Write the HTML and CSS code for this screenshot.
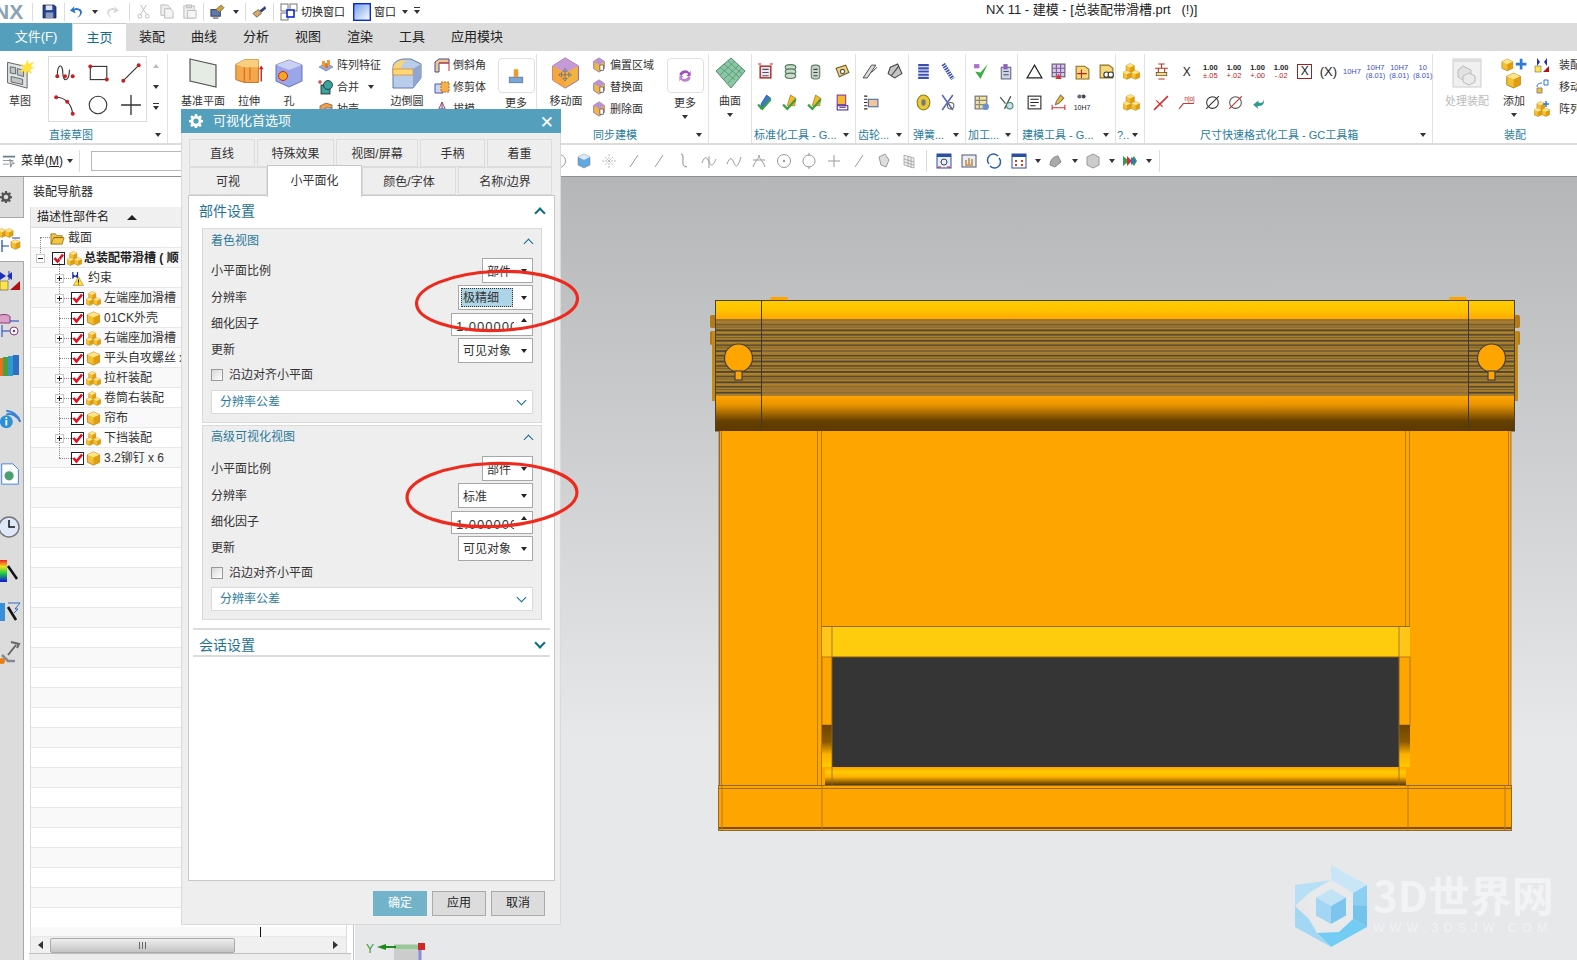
FILE: index.html
```html
<!DOCTYPE html>
<html lang="zh">
<head>
<meta charset="utf-8">
<title>NX 11 - 建模</title>
<link rel="stylesheet" href="styles.css">
</head>
<body>
<svg class="defs" aria-hidden="true">
<defs>
<symbol id="cube" viewBox="0 0 16 16"><path d="M8 1l6.500 3v8L8 15l-6.500-3V4z" fill="#f4c02f" stroke="#a67c1a" stroke-width=".8"/><path d="M1.500 4L8 7l6.500-3L8 1z" fill="#ffe48a"/><path d="M8 7v8l6.500-3V4z" fill="#e09d12"/></symbol>
<symbol id="asm" viewBox="0 0 16 16"><use href="#cube" x="2" y="0" width="9.500" height="9.500"/><use href="#cube" x="-1" y="6.500" width="9.500" height="9.500"/><use href="#cube" x="7" y="6.500" width="9.500" height="9.500"/></symbol>
<symbol id="chk" viewBox="0 0 13 13"><rect x=".5" y=".5" width="12" height="12" fill="#fff" stroke="#222"/><path d="M2.500 6l3 3.500L11 2.500" fill="none" stroke="#e01020" stroke-width="2.600"/></symbol>
<symbol id="folder" viewBox="0 0 16 14"><path d="M1 13V2h5l1 2h6v2H4L1 13h12l2-7H4" fill="#f2c644" stroke="#8c6a14" stroke-width=".8"/></symbol>
<symbol id="warn" viewBox="0 0 16 16"><path d="M3 1v7M8 1v7M3 4l2 1.500L3 7M8 4L6 5.500 8 7" stroke="#1a2fb0" stroke-width="1.300" fill="none"/><path d="M9 6l5.500 9.500h-11z" fill="#ffdc3a" stroke="#99801a" stroke-width=".6"/><path d="M9 9v3.500M9 13.500v1" stroke="#222"/></symbol>
<symbol id="plane" viewBox="0 0 32 32"><path d="M3 2l26 6v22L3 24z" fill="#e4ece3" stroke="#555" stroke-width="1.200"/></symbol>
<symbol id="sk" viewBox="0 0 32 36"><path d="M2 6l22 5v24L2 29z" fill="#dfe3e3" stroke="#555"/><path d="M5 11l6 1v7l-6-1zM13 13l7 2v7l-7-2zM6 22l13 3v6L6 28z" fill="#bfc4c4" stroke="#444" stroke-width=".8"/><path d="M24 3l2 5 6-3-4 6 5 1-6 2 3 5-6-3-2 6-1-6-6 1 5-5-4-4 6 1z" fill="#ffe23a"/></symbol>
<symbol id="extr" viewBox="0 0 32 34"><path d="M2 8l9-5h15v24H11l-9-3z" fill="#f3a94b" stroke="#c46a18"/><path d="M2 8l9 3h15v-8H11z" fill="#f8cf7e"/><path d="M11 11v16M17 11v14" stroke="#d95a20"/><path d="M29 12v14" stroke="#d02020" stroke-width="1.500"/><path d="M29 9l-2.500 4h5z" fill="#d02020"/></symbol>
<symbol id="hole" viewBox="0 0 32 32"><path d="M16 3l13 5v16l-13 6-13-6V8z" fill="#9aa6e8" stroke="#6a74b8"/><path d="M3 8l13 5 13-5-13-5z" fill="#c9d0f4"/><circle cx="10" cy="19" r="4.500" fill="#f5a623" stroke="#d02020"/></symbol>
<symbol id="pat" viewBox="0 0 16 16"><path d="M1 10l7-4 7 4-7 4z" fill="#9aa9d8" stroke="#6070a8" stroke-width=".6"/><rect x="4" y="4" width="3" height="5" fill="#f29a2e"/><rect x="9" y="3" width="3" height="5" fill="#f29a2e"/><rect x="7" y="7" width="3" height="4" fill="#e07a1a"/></symbol>
<symbol id="unite" viewBox="0 0 16 16"><rect x="3" y="6" width="9" height="9" fill="#3aa39a" stroke="#222" stroke-width=".8"/><circle cx="10" cy="6" r="4.500" fill="#3aa39a" stroke="#222" stroke-width=".8"/><path d="M0 3h4M2 1v4" stroke="#e01010"/></symbol>
<symbol id="shell" viewBox="0 0 16 16"><path d="M2 5l6-3 6 2v10H2z" fill="#f0a04a" stroke="#8a5a30" stroke-width=".8"/><path d="M7 7h6v7H7z" fill="#fff" stroke="#6070a8"/></symbol>
<symbol id="blend" viewBox="0 0 32 32"><path d="M2 10c0-5 6-8 12-8h6l10 5v14l-8 10H2z" fill="#b9cdea" stroke="#6078a8"/><path d="M2 12c0-6 6-9 12-9h5c-5 0-9 4-9 9z" fill="#f5d57a"/><path d="M2 12h20v6H2z" fill="#ffd873" stroke="#d9701a" stroke-width=".6"/><path d="M22 12l8-5v14l-8 10z" fill="#8ea6d0"/></symbol>
<symbol id="cham" viewBox="0 0 16 16"><path d="M1 5l4-3h10v4H5v9H1z" fill="#f3c985" stroke="#3c4ca0"/><path d="M5 6h10v8" stroke="#d03030" fill="none"/></symbol>
<symbol id="trim" viewBox="0 0 16 16"><path d="M1 5h8v9H1z" fill="#cdd4f2" stroke="#4a58a8"/><path d="M7 3h8v10H7z" fill="#f5b04a" stroke="#c06a20" stroke-dasharray="2 1"/></symbol>
<symbol id="draft" viewBox="0 0 16 16"><path d="M8 1l6 13H2z" fill="#eef" stroke="#d04040"/><path d="M8 1v13M5 8h6" stroke="#4a58a8"/></symbol>
<symbol id="more" viewBox="0 0 16 16"><rect x="2" y="9" width="12" height="5" fill="#7ba4d8" stroke="#4a6a9a" stroke-width=".6"/><rect x="6" y="2" width="4" height="7" fill="#f29a2e"/></symbol>
<symbol id="mv" viewBox="0 0 32 36"><path d="M15 1l15 9v16L15 35 1 26V10z" fill="#f3b33e" stroke="#8a5fa8"/><path d="M1 10l14-9 15 9-15 8z" fill="#c49ad8"/><path d="M15 18v17L1 26V10z" fill="#f7a63a"/><path d="M8 20h14M15 13v14M8 20l3-2.500v5zM22 20l-3-2.500v5zM15 13l-2.500 3h5zM15 27l-2.500-3h5z" fill="#ddd" stroke="#666" stroke-width=".8"/></symbol>
<symbol id="off" viewBox="0 0 16 18"><path d="M8 1l6 4v8l-6 4-6-4V5z" fill="#f0b74a" stroke="#7a5a9a" stroke-width=".8"/><path d="M2 5l6-4 6 4-6 4z" fill="#b894d4"/><path d="M9 9h4v6H9z" fill="#fff" stroke="#333" stroke-width=".7"/></symbol>
<symbol id="sync" viewBox="0 0 16 16"><path d="M3 7a5 5 0 0 1 9-2l1-2v5H9l2-1.500A3.500 3.500 0 0 0 5 8z" fill="#a050c0"/><path d="M13 9a5 5 0 0 1-9 2l-1 2V8h4l-2 1.500A3.500 3.500 0 0 0 11 8z" fill="#c080d8"/></symbol>
<symbol id="surf" viewBox="0 0 32 32"><path d="M2 14L17 1l14 13-14 17z" fill="#89c7a5" stroke="#4f8a6a"/><path d="M6 10l15 13M10 7l15 13M14 4l14 13M6 18L21 4M10 22L25 8M14 26l14-15" stroke="#4f8a6a" stroke-width=".7"/></symbol>
<symbol id="fr" viewBox="0 0 16 16"><rect x="3" y="3" width="10" height="11" fill="#e8e8ff" stroke="#b03020" stroke-width="1.400"/><path d="M5 6h6M5 9h6M5 12h6" stroke="#555"/><path d="M1 1h3M12 1h3" stroke="#d02020"/></symbol>
<symbol id="coilg" viewBox="0 0 16 16"><ellipse cx="8" cy="4" rx="5" ry="2.500" fill="#cfd8cf" stroke="#4a7a5a"/><ellipse cx="8" cy="8" rx="5" ry="2.500" fill="#cfd8cf" stroke="#4a7a5a"/><ellipse cx="8" cy="12" rx="5" ry="2.500" fill="#cfd8cf" stroke="#4a7a5a"/></symbol>
<symbol id="cyl" viewBox="0 0 16 16"><rect x="4" y="2" width="8" height="13" rx="3" fill="#c8d4c8" stroke="#5a7a6a"/><path d="M6 6h4M6 9h4M6 12h4" stroke="#444"/></symbol>
<symbol id="tag" viewBox="0 0 16 16"><path d="M2 5l9-3 3 7-9 4z" fill="#f1d27a" stroke="#6a5a30"/><circle cx="8" cy="8" r="2" fill="#fff" stroke="#555"/></symbol>
<symbol id="gblue" viewBox="0 0 16 16"><path d="M9 1l4 3-6 8-4 2 1-5z" fill="#3a78c8" stroke="#1a4a88" stroke-width=".6"/><path d="M1 10l4 4 8-9" stroke="#3aa040" stroke-width="2" fill="none"/></symbol>
<symbol id="gyell" viewBox="0 0 16 16"><path d="M8 1l5 3-1 7H5z" fill="#f5b92a" stroke="#8a6a1a" stroke-width=".6"/><path d="M1 10l4 4 8-9" stroke="#3aa040" stroke-width="2" fill="none"/></symbol>
<symbol id="gbook" viewBox="0 0 16 16"><rect x="3" y="1" width="8" height="9" fill="#f5b92a" stroke="#7a3f9a"/><rect x="3" y="11" width="10" height="4" fill="#fff" stroke="#4a2a8a"/><path d="M5 12.500h6" stroke="#4a2a8a"/></symbol>
<symbol id="ge1" viewBox="0 0 16 16"><path d="M1 14L9 2h4l-8 12zM9 9l5-5" stroke="#444" fill="#ddd" stroke-width=".9"/></symbol>
<symbol id="ge2" viewBox="0 0 16 16"><path d="M4 4l7-3 4 9-7 4-6-4z" fill="#c5c5c5" stroke="#444"/><path d="M5 12L12 3" stroke="#444"/></symbol>
<symbol id="ge3" viewBox="0 0 16 16"><path d="M2 2h3M2 5h3M2 8h3M2 11h3M2 14h3" stroke="#222"/><rect x="6" y="5" width="9" height="7" fill="#f0c79a" stroke="#4a68a8"/></symbol>
<symbol id="spr" viewBox="0 0 16 16"><path d="M3 2h10M3 5h10M3 8h10M3 11h10M3 14h10" stroke="#3a4fb0" stroke-width="2"/></symbol>
<symbol id="spr2" viewBox="0 0 16 16"><path d="M4 1l9 14" stroke="#3a4fb0" stroke-width="4" stroke-dasharray="1.500 .8"/></symbol>
<symbol id="ring" viewBox="0 0 16 16"><ellipse cx="8" cy="8" rx="6" ry="7" fill="#e8c93a" stroke="#8a7a1a"/><ellipse cx="8" cy="8" rx="2" ry="3" fill="#777"/></symbol>
<symbol id="xt" viewBox="0 0 16 16"><path d="M3 1l10 14M13 1L3 15" stroke="#5a6ab0" stroke-width="1.500"/><circle cx="11" cy="11" r="3" fill="none" stroke="#666"/></symbol>
<symbol id="vck" viewBox="0 0 16 16"><path d="M2 8l5 7 7-14-7 8z" fill="#3ab040"/><rect x="1" y="1" width="5" height="4" fill="#b070d0"/></symbol>
<symbol id="mach" viewBox="0 0 16 16"><rect x="4" y="4" width="9" height="11" fill="#c7d3ea" stroke="#667"/><rect x="6" y="1" width="4" height="5" fill="#9060c0"/><path d="M6 8h5M6 11h5" stroke="#555"/></symbol>
<symbol id="tbl" viewBox="0 0 16 16"><rect x="2" y="2" width="11" height="12" fill="#f2e29a" stroke="#667"/><path d="M2 6h11M2 10h11M6 2v12" stroke="#888"/><circle cx="12" cy="12" r="3" fill="#6a90d0"/></symbol>
<symbol id="tool" viewBox="0 0 16 16"><path d="M3 3l5 6M13 2L7 14" stroke="#555" stroke-width="1.200"/><circle cx="12" cy="11" r="3" fill="#cde" stroke="#3a8a6a"/></symbol>
<symbol id="tri" viewBox="0 0 16 16"><path d="M8 2l7 12H1z" fill="none" stroke="#222" stroke-width="1.100"/></symbol>
<symbol id="grd" viewBox="0 0 16 16"><rect x="2" y="1" width="12" height="12" fill="#d8c8e8" stroke="#556"/><path d="M2 5h12M2 9h12M6 1v12M10 1v12" stroke="#7a5a9a"/><path d="M5 15l3-5 3 5z" fill="#e03030"/></symbol>
<symbol id="fld2" viewBox="0 0 16 16"><path d="M2 3h8l4 3v9H2z" fill="#f5d77c" stroke="#8a6a20"/><path d="M7 6v8M3 10h9" stroke="#c02020"/></symbol>
<symbol id="fld3" viewBox="0 0 16 16"><path d="M2 2h8l4 3v9H2z" fill="#f5d77c" stroke="#8a6a20"/><circle cx="8" cy="11" r="2.500" fill="#fff" stroke="#333"/><circle cx="12" cy="11" r="2.500" fill="#fff" stroke="#333"/></symbol>
<symbol id="note" viewBox="0 0 16 16"><rect x="2" y="2" width="12" height="12" fill="#fff" stroke="#222"/><path d="M4 5h8M4 8h8M4 11h5" stroke="#222"/></symbol>
<symbol id="rule" viewBox="0 0 16 16"><path d="M2 10v5M14 10v5M2 13h12" stroke="#d03030"/><path d="M10 1l3 3-5 5-3 1 1-3z" fill="#f5c02a" stroke="#776"/></symbol>
<symbol id="bino" viewBox="0 0 16 16"><circle cx="5" cy="5" r="3" fill="#667"/><circle cx="11" cy="5" r="3" fill="#445"/><rect x="7" y="3" width="2" height="3" fill="#aaa"/></symbol>
<symbol id="dimh" viewBox="0 0 16 16"><path d="M5 1h6M8 1v4M5 15h6M2 5h12M5 5v6M11 5v6" stroke="#c03020"/><rect x="3" y="9" width="10" height="3" fill="#ffd873" stroke="#333" stroke-width=".6"/></symbol>
<symbol id="dg" viewBox="0 0 16 16"><path d="M1 15L14 2" stroke="#d83030" stroke-width="1.500"/><path d="M3 6l6 6" stroke="#d83030"/></symbol>
<symbol id="dg2" viewBox="0 0 16 16"><path d="M1 14l4-5h10" stroke="#d83030" fill="none"/><text x="6" y="7" font-size="6" fill="#c02020" font-family="Liberation Sans">n|o|</text></symbol>
<symbol id="odia" viewBox="0 0 16 16"><circle cx="8" cy="8" r="5.500" fill="none" stroke="#333"/><path d="M2 14L14 2" stroke="#333"/></symbol>
<symbol id="odia2" viewBox="0 0 16 16"><circle cx="8" cy="8" r="5.500" fill="none" stroke="#555"/><path d="M2 14L14 2" stroke="#c03030"/></symbol>
<symbol id="back" viewBox="0 0 16 16"><path d="M12 5c1 5-2 7-6 6l1 3-5-4 5-4v2c3 1 5 0 5-3z" fill="#2e9a8a"/></symbol>
<symbol id="gline" viewBox="0 0 16 16"><path d="M4 14L12 2" stroke="#999" stroke-width="1"/></symbol>
<symbol id="gcurve" viewBox="0 0 16 16"><path d="M5 1c5 0-2 13 6 13" stroke="#888" fill="none"/></symbol>
<symbol id="gwave" viewBox="0 0 16 16"><path d="M1 10c3-8 5-6 7-1s4 4 7-3M8 3v12" stroke="#999" fill="none"/></symbol>
<symbol id="gs" viewBox="0 0 16 16"><path d="M1 11c3-8 5-6 7-1s4 4 7-6" stroke="#999" fill="none"/></symbol>
<symbol id="gt" viewBox="0 0 16 16"><path d="M2 14c3-8 6-8 6-12 0 4 3 4 6 12M2 7h12" stroke="#999" fill="none"/></symbol>
<symbol id="gc" viewBox="0 0 16 16"><circle cx="8" cy="8" r="6.500" fill="none" stroke="#999"/><circle cx="8" cy="8" r="1.200" fill="#999"/></symbol>
<symbol id="gc2" viewBox="0 0 16 16"><circle cx="8" cy="8" r="6" fill="none" stroke="#999"/><path d="M8 0v3M8 13v3" stroke="#999"/></symbol>
<symbol id="gp" viewBox="0 0 16 16"><path d="M8 2v12M2 8h12" stroke="#999"/></symbol>
<symbol id="gsh" viewBox="0 0 16 16"><path d="M3 4l6-3 4 6-3 7-5-2z" fill="#ddd" stroke="#999"/></symbol>
<symbol id="gmesh" viewBox="0 0 16 16"><path d="M3 2l10 3v10L3 12zM3 6l10 3M3 9l10 3M7 3v11M10 4v11" fill="#eee" stroke="#999" stroke-width=".7"/></symbol>
<symbol id="bcube" viewBox="0 0 16 16"><path d="M8 1l6 3v8l-6 3-6-3V4z" fill="#62a8e0" stroke="#777" stroke-width=".5"/><path d="M2 4l6-3 6 3-6 3z" fill="#dce8f4"/></symbol>
<symbol id="star4" viewBox="0 0 16 16"><path d="M8 1v14M1 8h14M4 4l8 8M12 4l-8 8" stroke="#bbb" stroke-dasharray="2 1"/></symbol>
<symbol id="fit" viewBox="0 0 16 16"><rect x="1" y="1" width="14" height="14" fill="#e8eef8" stroke="#2a4fa0"/><rect x="1" y="1" width="14" height="3" fill="#2a4fa0"/><circle cx="8" cy="9" r="3" fill="none" stroke="#444"/><path d="M2 14h3M11 14h3" stroke="#d02020"/></symbol>
<symbol id="pan" viewBox="0 0 16 16"><rect x="1" y="2" width="14" height="12" fill="#e8eef8" stroke="#556"/><path d="M8 5v8M5 7v5h6V6" stroke="#caa06a" stroke-width="2" fill="none"/></symbol>
<symbol id="rot" viewBox="0 0 16 16"><path d="M3 11A6 6 0 0 1 12 3M13 5a6 6 0 0 1-9 8" stroke="#2a5fb0" stroke-width="1.500" fill="none"/></symbol>
<symbol id="win" viewBox="0 0 16 16"><rect x="1" y="1" width="14" height="14" fill="#fff" stroke="#2a4fa0"/><rect x="1" y="1" width="14" height="3" fill="#2a4fa0"/><path d="M4 7h2v2H4zM10 7h2v2h-2zM4 11h2v2H4zM10 11h2v2h-2z" fill="#d04020"/></symbol>
<symbol id="sty" viewBox="0 0 16 16"><path d="M2 12c0-6 5-9 8-9l3 6-6 5z" fill="#aaa" stroke="#888"/></symbol>
<symbol id="sty2" viewBox="0 0 16 16"><path d="M8 1l6 3v8l-6 3-6-3V4z" fill="#ccc" stroke="#999"/></symbol>
<symbol id="sty3" viewBox="0 0 16 16"><path d="M1 3l6 5-6 5zM8 8l4-5 3 5-3 5z" fill="#3a9a50"/><path d="M5 3l5 5-5 5z" fill="#d03030"/><path d="M9 4l5 4-5 4z" fill="#3a70c0"/></symbol>
<symbol id="proc" viewBox="0 0 32 32"><rect x="2" y="2" width="28" height="28" fill="#f0f0f0" stroke="#ccc"/><rect x="2" y="2" width="28" height="3" fill="#ddd"/><path d="M12 9l8 4v6l-8 4-5-3v-7z" fill="#e2e2e2" stroke="#bbb"/><path d="M18 16l6 3v6l-6 3-6-3v-6z" fill="#eaeaea" stroke="#bbb"/></symbol>
<symbol id="add" viewBox="0 0 32 36"><use href="#cube" x="1" y="1" width="15" height="16"/><use href="#cube" x="6" y="17" width="19" height="19"/><path d="M24 2v12M18 8h12" stroke="#2f79d8" stroke-width="3"/></symbol>
<symbol id="as1" viewBox="0 0 16 16"><path d="M3 1l3 4-3 4zM13 1l-3 4 3 4z" fill="#2030b0"/><rect x="1" y="9" width="6" height="6" fill="#ffe34a" stroke="#555" stroke-width=".5"/><path d="M9 15l6-6v6z" fill="#b01010"/></symbol>
<symbol id="as2" viewBox="0 0 16 16"><path d="M10 1h4v5h-4z" fill="none" stroke="#2f79d8"/><path d="M3 9h5v5H3z" fill="#f5c02a" stroke="#888"/><path d="M8 4c-3 0-5 1-5 4" stroke="#2f79d8" fill="none"/></symbol>
<symbol id="as3" viewBox="0 0 16 16"><use href="#asm"/><path d="M12 0v6M9 3h6" stroke="#2f79d8" stroke-width="1.500"/></symbol>
<symbol id="save" viewBox="0 0 16 16"><path d="M1 1h12l2 2v12H1z" fill="#25418f" stroke="#111" stroke-width=".6"/><rect x="4" y="1.500" width="7" height="5" fill="#dfe6f2"/><rect x="4" y="9" width="8" height="6" fill="#8a9ac0"/></symbol>
<symbol id="undo" viewBox="0 0 16 16"><path d="M8 15c6-2 8-8 3-10-2-1-4-1-6 0l1-3-5 5 6 3-1-3c2-1 4-.500 5 .500 2 2 0 6-3 7.500z" fill="#2f73d0"/></symbol>
<symbol id="redo" viewBox="0 0 16 16"><path d="M8 15c-6-2-8-8-3-10 2-1 4-1 6 0l-1-3 5 5-6 3 1-3c-2-1-4-.500-5 .500-2 2 0 6 3 7.500z" fill="#d8d8d8"/></symbol>
<symbol id="cut" viewBox="0 0 16 16"><path d="M11 1L5 11M5 1l6 10" stroke="#bbb"/><circle cx="4" cy="13" r="2" fill="none" stroke="#bbb"/><circle cx="12" cy="13" r="2" fill="none" stroke="#bbb"/></symbol>
<symbol id="copy" viewBox="0 0 16 16"><path d="M2 1h7l3 3v8H2z" fill="#eee" stroke="#bbb"/><path d="M6 5h6l3 3v7H6z" fill="#f4f4f4" stroke="#bbb"/></symbol>
<symbol id="paste" viewBox="0 0 16 16"><rect x="2" y="2" width="11" height="13" fill="#eee" stroke="#bbb"/><rect x="5" y="1" width="5" height="3" fill="#ddd" stroke="#bbb"/><rect x="6" y="7" width="9" height="8" fill="#f6f6f6" stroke="#bbb"/></symbol>
<symbol id="swin" viewBox="0 0 18 18"><rect x="1" y="1" width="7" height="7" fill="#fff" stroke="#777"/><rect x="10" y="1" width="7" height="7" fill="#fff" stroke="#777"/><rect x="1" y="10" width="7" height="7" fill="#fff" stroke="#777"/><rect x="7" y="7" width="7" height="7" fill="#fff" stroke="#0a2bd0" stroke-width="1.600"/></symbol>
<symbol id="wnd" viewBox="0 0 18 18"><defs><linearGradient id="wg" x1="0" y1="0" x2="1" y2="1"><stop offset="0" stop-color="#6f9ce8"/><stop offset="1" stop-color="#fff"/></linearGradient></defs><rect x=".7" y=".7" width="16.600" height="16.600" fill="url(#wg)" stroke="#0a2bd0" stroke-width="1.400"/></symbol>
<symbol id="macro" viewBox="0 0 16 16"><rect x="1" y="6" width="10" height="7" fill="#5a7ab0" stroke="#334"/><path d="M6 6l6-5 3 3-5 5z" fill="#c8a040" stroke="#444" stroke-width=".6"/><path d="M3 15h6" stroke="#334"/></symbol>
<symbol id="brush" viewBox="0 0 16 16"><path d="M1 10l6-4 3 4-5 4z" fill="#d8a868" stroke="#665"/><path d="M8 7l6-5 1 3-5 4z" fill="#333c80"/></symbol>
<symbol id="menu" viewBox="0 0 16 16"><path d="M1 2h14v2H1zM1 7h12v1H1zM1 11h7v1H1z" fill="#6a8090"/><path d="M9 6l5 5-3 .500L10 15z" fill="#ddd" stroke="#555" stroke-width=".7"/></symbol>
<symbol id="gear" viewBox="0 0 16 16"><path fill-rule="evenodd" d="M6.700 0h2.600l.4 2.200 1.300.6 1.900-1.300 1.800 1.800-1.300 1.900.6 1.300L16 6.900v2.600l-2.200.4-.6 1.300 1.300 1.900-1.800 1.800-1.900-1.300-1.300.6-.4 2.200H6.700l-.4-2.200-1.300-.6-1.900 1.300-1.800-1.800 1.300-1.900-.6-1.300L0 9.500V6.900l2.200-.4.600-1.300L1.500 3.300l1.800-1.800 1.900 1.300 1.300-.6zM8 5a3 3 0 1 0 0 6 3 3 0 0 0 0-6z"/></symbol>
<symbol id="r1" viewBox="0 0 21 24"><use href="#cube" x="-3" y="0" width="10" height="10"/><use href="#cube" x="4" y="0" width="10" height="10"/><use href="#cube" x="10" y="11" width="11" height="11"/><path d="M2 12v12M2 18h7M12 10h8" stroke="#1a40c0" stroke-width="1.200" fill="none"/></symbol>
<symbol id="r2" viewBox="0 0 21 24"><path d="M0 1l6 4-6 4zM12 1L7 5l5 4zM14 1" fill="#1a30b8"/><rect x="0" y="10" width="8" height="9" fill="#ffe34a" stroke="#555" stroke-width=".6"/><path d="M10 19l10-9v9z" fill="#b01010"/><path d="M9 0v9" stroke="#1a30b8"/></symbol>
<symbol id="r3" viewBox="0 0 21 24"><ellipse cx="4" cy="4" rx="6" ry="2.500" fill="#d9a0c8" stroke="#8a3a7a"/><path d="M-2 4v6h12V4" fill="#d9a0c8" stroke="#8a3a7a"/><path d="M2 12v12M2 18h8M10 8h9" stroke="#1a40c0" fill="none"/><circle cx="14" cy="18" r="4" fill="#fff" stroke="#8a3a7a"/><circle cx="14" cy="18" r="1.300" fill="#8a3a7a"/></symbol>
<symbol id="r4" viewBox="0 0 21 24"><rect x="-3" y="4" width="6" height="18" fill="#e87020"/><rect x="3" y="3" width="5" height="19" fill="#4aa040"/><rect x="8" y="2" width="5" height="20" fill="#2e9ad0"/><rect x="13" y="1" width="6" height="20" fill="#2f6fc0"/></symbol>
<symbol id="r5" viewBox="0 0 21 26"><path d="M6 8a13 13 0 0 1 15 8M6 4a18 18 0 0 1 15 12" stroke="#3a7fd8" stroke-width="2.200" fill="none"/><circle cx="6" cy="16" r="7" fill="#2a90d8"/><path d="M5 11h2v2H5zM5 14h2v6H5z" fill="#fff"/></symbol>
<symbol id="r6" viewBox="0 0 21 26"><path d="M1 2h12l6 6v16H1z" fill="#fff" stroke="#3a7fd8"/><circle cx="9" cy="15" r="5" fill="#4aa070"/></symbol>
<symbol id="r7" viewBox="0 0 21 24"><circle cx="9" cy="12" r="10" fill="#dde8f8" stroke="#777" stroke-width="1.500"/><path d="M9 5v7h6" stroke="#111" stroke-width="1.500" fill="none"/></symbol>
<symbol id="r8" viewBox="0 0 21 24"><defs><linearGradient id="rb" x1="0" y1="0" x2="0" y2="1"><stop offset="0" stop-color="#f02020"/><stop offset=".3" stop-color="#f0e020"/><stop offset=".6" stop-color="#20d040"/><stop offset="1" stop-color="#1010e0"/></linearGradient></defs><rect x="-2" y="1" width="9" height="22" fill="url(#rb)"/><path d="M8 7l9 13" stroke="#111" stroke-width="2.500"/></symbol>
<symbol id="r9" viewBox="0 0 21 24"><rect x="-2" y="3" width="7" height="18" fill="#3a90d8"/><path d="M8 3h12l-5 6h3l-4 4" stroke="#2f6fc0" fill="none"/><path d="M8 7l8 13" stroke="#111" stroke-width="2.500"/></symbol>
<symbol id="r10" viewBox="0 0 21 24"><path d="M8 14L16 4M11 1l8 2-2 4" stroke="#666" stroke-width="2" fill="none"/><path d="M2 14l6 6h7" stroke="#889" stroke-width="2.500" fill="none"/><circle cx="2" cy="20" r="3" fill="#e8801a"/></symbol>
</defs>
</svg>

<div class="app">
  <header class="titlebar">
    <span class="logo">NX</span>
    <span class="qsep s1"></span>
    <svg class="qi m1"><use href="#save"/></svg>
    <span class="qsep s2"></span>
    <svg class="qi m2"><use href="#undo"/></svg>
    <span class="arr m3"></span>
    <svg class="qi m4"><use href="#redo"/></svg>
    <span class="qsep s3"></span>
    <svg class="qi m5"><use href="#cut"/></svg>
    <svg class="qi m6"><use href="#copy"/></svg>
    <svg class="qi m6"><use href="#paste"/></svg>
    <span class="qsep s4"></span>
    <svg class="qi m5"><use href="#macro"/></svg>
    <span class="arr m3"></span>
    <span class="qsep s4"></span>
    <svg class="qi m7"><use href="#brush"/></svg>
    <span class="qsep s4"></span>
    <svg class="qi2 m7"><use href="#swin"/></svg>
    <span class="qt">切换窗口</span>
    <svg class="qi2 m8"><use href="#wnd"/></svg>
    <span class="qt">窗口</span>
    <span class="arr m9"></span>
    <span class="arr dash m9"></span>
    <span class="doc-title">NX 11 - 建模 - [总装配带滑槽.prt&nbsp;&nbsp; (!)]</span>
  </header>

  <nav class="tabs">
    <span class="file">文件(F)</span>
    <span class="tab on">主页</span>
    <span class="tab">装配</span>
    <span class="tab">曲线</span>
    <span class="tab">分析</span>
    <span class="tab">视图</span>
    <span class="tab">渲染</span>
    <span class="tab">工具</span>
    <span class="tab wide">应用模块</span>
  </nav>

  <section class="ribbon">
    <div class="grp g-a">
      <div class="body">
        <div class="big w-sk"><svg class="lg"><use href="#sk"/></svg><span>草图</span></div>
        <div class="skbox">
          <svg viewBox="0 0 20 20"><path d="M3 13c0-12 5-12 5-3s6 8 6-3" fill="none" stroke="#333"/><circle cx="3" cy="13" r="1.800" fill="#c82020"/><circle cx="10" cy="13" r="1.800" fill="#c82020"/><circle cx="17" cy="13" r="1.800" fill="#c82020"/></svg>
          <svg viewBox="0 0 20 20"><rect x="3" y="4" width="15" height="12" fill="none" stroke="#333"/><circle cx="3" cy="4" r="1.800" fill="#c82020"/><circle cx="18" cy="16" r="1.800" fill="#c82020"/></svg>
          <svg viewBox="0 0 20 20"><path d="M3 17L17 3" stroke="#333"/><circle cx="3" cy="17" r="1.800" fill="#c82020"/><circle cx="17" cy="3" r="1.800" fill="#c82020"/></svg>
          <svg viewBox="0 0 20 20"><path d="M2 3c8 0 14 6 15 15" fill="none" stroke="#333"/><circle cx="2" cy="3" r="1.800" fill="#c82020"/><circle cx="12" cy="7" r="1.800" fill="#c82020"/><circle cx="17" cy="18" r="1.800" fill="#c82020"/></svg>
          <svg viewBox="0 0 20 20"><circle cx="10" cy="10" r="8" fill="none" stroke="#333"/></svg>
          <svg viewBox="0 0 20 20"><path d="M10 1v18M1 10h18" stroke="#333" stroke-width="1.200"/></svg>
        </div>
        <div class="spin3"><span class="up"></span><span class="arr"></span><span class="arr dash"></span></div>
      </div>
      <div class="glabel p-49"><span>直接草图</span><i class="arr"></i></div>
    </div>

    <div class="grp g-b">
      <div class="body">
        <div class="big w-44"><svg class="lg"><use href="#plane"/></svg><span>基准平面</span></div>
        <div class="big w-40x"><svg class="lg"><use href="#extr"/></svg><span>拉伸</span></div>
        <div class="big w-36"><svg class="lg"><use href="#hole"/></svg><span>孔</span></div>
        <div class="col w-72">
          <div class="ci"><svg><use href="#pat"/></svg>阵列特征</div>
          <div class="ci"><svg><use href="#unite"/></svg>合并<i class="arr ml"></i></div>
          <div class="ci"><svg><use href="#shell"/></svg>抽壳</div>
        </div>
        <div class="big w-38"><svg class="lg"><use href="#blend"/></svg><span>边倒圆</span></div>
        <div class="col w-64">
          <div class="ci"><svg><use href="#cham"/></svg>倒斜角</div>
          <div class="ci"><svg><use href="#trim"/></svg>修剪体</div>
          <div class="ci"><svg><use href="#draft"/></svg>拔模</div>
        </div>
        <div class="big w-38"><div class="morebox"><svg><use href="#more"/></svg></div><span>更多</span></div>
      </div>
    </div>

    <div class="grp g-c">
      <div class="body">
        <div class="big w-50"><svg class="lg"><use href="#mv"/></svg><span>移动面</span></div>
        <div class="col w-74">
          <div class="ci"><svg><use href="#off"/></svg>偏置区域</div>
          <div class="ci"><svg><use href="#off"/></svg>替换面</div>
          <div class="ci"><svg><use href="#off"/></svg>删除面</div>
        </div>
        <div class="big w-38"><div class="morebox"><svg><use href="#sync"/></svg></div><span>更多</span><i class="arr"></i></div>
      </div>
      <div class="glabel p-56"><span>同步建模</span><i class="arr"></i></div>
    </div>

    <div class="grp g-d">
      <div class="body"><div class="big w-42"><svg class="lg"><use href="#surf"/></svg><span>曲面</span><i class="arr"></i></div></div>
    </div>

    <div class="grp g-e">
      <div class="body igrid c4">
        <svg><use href="#fr"/></svg><svg><use href="#coilg"/></svg><svg><use href="#cyl"/></svg><svg class="sepl"><use href="#tag"/></svg>
        <svg><use href="#gblue"/></svg><svg><use href="#gyell"/></svg><svg><use href="#gyell"/></svg><svg class="sepl"><use href="#gbook"/></svg>
      </div>
      <div class="glabel p-2"><span>标准化工具 - G...</span><i class="arr"></i></div>
    </div>
    <div class="grp g-f">
      <div class="body igrid c2">
        <svg><use href="#ge1"/></svg><svg><use href="#ge2"/></svg><svg><use href="#ge3"/></svg>
      </div>
      <div class="glabel p-2"><span>齿轮...</span><i class="arr"></i></div>
    </div>
    <div class="grp g-g">
      <div class="body igrid c2">
        <svg><use href="#spr"/></svg><svg><use href="#spr2"/></svg><svg><use href="#ring"/></svg><svg><use href="#xt"/></svg>
      </div>
      <div class="glabel p-4"><span>弹簧...</span><i class="arr"></i></div>
    </div>
    <div class="grp g-h">
      <div class="body igrid c2">
        <svg><use href="#vck"/></svg><svg><use href="#mach"/></svg><svg><use href="#tbl"/></svg><svg><use href="#tool"/></svg>
      </div>
      <div class="glabel p-2"><span>加工...</span><i class="arr"></i></div>
    </div>
    <div class="grp g-i">
      <div class="body igrid c4">
        <svg><use href="#tri"/></svg><svg><use href="#grd"/></svg><svg><use href="#fld2"/></svg><svg><use href="#fld3"/></svg>
        <svg><use href="#note"/></svg><svg><use href="#rule"/></svg><div class="tolb"><svg><use href="#bino"/></svg><b>10H7</b></div>
      </div>
      <div class="glabel p-5"><span>建模工具 - G...</span><i class="arr"></i></div>
    </div>
    <div class="grp g-j">
      <div class="body igrid c1">
        <svg><use href="#asm"/></svg><svg><use href="#asm"/></svg>
      </div>
      <div class="glabel p-1"><span>?..</span><i class="arr"></i></div>
    </div>
    <div class="grp g-k">
      <div class="body">
        <div class="igrid c1 k-first"><svg><use href="#dimh"/></svg><svg><use href="#dg"/></svg></div>
        <div class="igrid c11">
          <span class="dx">X</span>
          <span class="tol"><b>1.00</b><em>±.05</em></span>
          <span class="tol"><b>1.00</b><em>+.02</em></span>
          <span class="tol"><b>1.00</b><em>+.00</em></span>
          <span class="tol"><b>1.00</b><em>-.02</em></span>
          <span class="dxb">X</span>
          <span class="dxr">(X)</span>
          <span class="fit">10H7</span>
          <span class="fit two">10H7<br>(8.01)</span>
          <span class="fit two">10H7<br>(8.01)</span>
          <span class="fit two">10<br>(8.01)</span>
          <svg><use href="#dg2"/></svg>
          <svg class="shift"><use href="#odia"/></svg>
          <svg class="shift"><use href="#odia2"/></svg>
          <svg class="shift"><use href="#back"/></svg>
        </div>
      </div>
      <div class="glabel p-55"><span>尺寸快速格式化工具 - GC工具箱</span><i class="arr"></i></div>
    </div>
    <div class="grp g-l">
      <div class="body">
        <div class="big w-56 off"><svg class="lg"><use href="#proc"/></svg><span>处理装配</span></div>
        <div class="big w-40"><svg class="lg"><use href="#add"/></svg><span>添加</span><i class="arr"></i></div>
        <div class="col w-44">
          <div class="ci"><svg><use href="#as1"/></svg>装配约束</div>
          <div class="ci"><svg><use href="#as2"/></svg>移动组件</div>
          <div class="ci"><svg><use href="#as3"/></svg>阵列组件</div>
        </div>
      </div>
      <div class="glabel p-71"><span>装配</span></div>
    </div>
  </section>

  <div class="toolbar">
    <svg class="t-menu"><use href="#menu"/></svg>
    <span class="t-label">菜单(<u>M</u>)</span><i class="arr t-arr"></i>
    <span class="t-sep"></span>
    <span class="t-input"></span>
    <div class="t-icons">
      <svg><use href="#gc"/></svg><svg><use href="#bcube"/></svg><svg><use href="#star4"/></svg>
      <svg><use href="#gline"/></svg><svg><use href="#gline"/></svg><svg><use href="#gcurve"/></svg>
      <svg><use href="#gwave"/></svg><svg><use href="#gs"/></svg><svg><use href="#gt"/></svg>
      <svg><use href="#gc"/></svg><svg><use href="#gc2"/></svg><svg><use href="#gp"/></svg>
      <svg><use href="#gline"/></svg><svg><use href="#gsh"/></svg><svg><use href="#gmesh"/></svg>
      <span class="t-sep2"></span>
      <svg><use href="#fit"/></svg><svg><use href="#pan"/></svg><svg><use href="#rot"/></svg>
      <svg><use href="#win"/></svg><i class="arr"></i>
      <svg><use href="#sty"/></svg><i class="arr"></i>
      <svg><use href="#sty2"/></svg><i class="arr"></i>
      <svg><use href="#sty3"/></svg><i class="arr"></i>
      <span class="t-sep2"></span>
    </div>
  </div>

  <main class="main">
    <aside class="rail">
      <div class="rail-gear"><svg><use href="#gear"/></svg></div>
      <div class="rail-on"><svg><use href="#r1"/></svg></div>
      <div class="rail-list">
        <svg><use href="#r2"/></svg><svg><use href="#r3"/></svg><svg><use href="#r4"/></svg>
        <svg><use href="#r5"/></svg><svg><use href="#r6"/></svg><svg><use href="#r7"/></svg>
        <svg><use href="#r8"/></svg><svg><use href="#r9"/></svg><svg><use href="#r10"/></svg>
      </div>
    </aside>
    <section class="navpanel">
      <h2 class="nav-title">装配导航器</h2>
      <div class="table">
        <div class="thead"><span>描述性部件名</span><i class="sort"></i></div>
        <div class="tree">
          <div class="row r0 noexp"><svg class="ic"><use href="#folder"/></svg><span>截面</span></div>
          <div class="row r1x"><i class="exp minus"></i><svg class="cb"><use href="#chk"/></svg><svg class="ic"><use href="#asm"/></svg><strong>总装配带滑槽 ( 顺</strong></div>
          <div class="row r2x"><i class="exp"></i><svg class="ic warnic"><use href="#warn"/></svg><span>约束</span></div>
          <div class="row r2x"><i class="exp"></i><svg class="cb"><use href="#chk"/></svg><svg class="ic"><use href="#asm"/></svg><span>左端座加滑槽</span></div>
          <div class="row r2x leaf"><i class="exp"></i><svg class="cb"><use href="#chk"/></svg><svg class="ic"><use href="#cube"/></svg><span>01CK外壳</span></div>
          <div class="row r2x"><i class="exp"></i><svg class="cb"><use href="#chk"/></svg><svg class="ic"><use href="#asm"/></svg><span>右端座加滑槽</span></div>
          <div class="row r2x leaf"><i class="exp"></i><svg class="cb"><use href="#chk"/></svg><svg class="ic"><use href="#cube"/></svg><span>平头自攻螺丝 x 4</span></div>
          <div class="row r2x"><i class="exp"></i><svg class="cb"><use href="#chk"/></svg><svg class="ic"><use href="#asm"/></svg><span>拉杆装配</span></div>
          <div class="row r2x"><i class="exp"></i><svg class="cb"><use href="#chk"/></svg><svg class="ic"><use href="#asm"/></svg><span>卷筒右装配</span></div>
          <div class="row r2x leaf"><i class="exp"></i><svg class="cb"><use href="#chk"/></svg><svg class="ic"><use href="#cube"/></svg><span>帘布</span></div>
          <div class="row r2x"><i class="exp"></i><svg class="cb"><use href="#chk"/></svg><svg class="ic"><use href="#asm"/></svg><span>下挡装配</span></div>
          <div class="row r2x leaf last"><i class="exp"></i><svg class="cb"><use href="#chk"/></svg><svg class="ic"><use href="#cube"/></svg><span>3.2铆钉 x 6</span></div>
        </div>
        <div class="tfoot"></div>
        <div class="hscroll"><i class="sl"></i><span class="thumb"><em></em></span><i class="sr"></i></div>
      </div>
      <div class="navfoot"></div>
    </section>

    <section class="viewport">
      <svg class="model" viewBox="355 177 1223 783">
        <defs>
          <linearGradient id="top" x1="0" y1="0" x2="0" y2="1"><stop offset="0" stop-color="#ffcc00"/><stop offset=".5" stop-color="#ffc400"/><stop offset="1" stop-color="#ffa800"/></linearGradient>
          <linearGradient id="low" x1="0" y1="0" x2="0" y2="1"><stop offset="0" stop-color="#ffa500"/><stop offset=".25" stop-color="#e99500"/><stop offset=".72" stop-color="#643f00"/><stop offset="1" stop-color="#5c3900"/></linearGradient>
          <linearGradient id="roll" x1="0" y1="0" x2="0" y2="1"><stop offset="0" stop-color="#ffa500"/><stop offset=".3" stop-color="#ffcc00"/><stop offset=".55" stop-color="#ffb000"/><stop offset="1" stop-color="#5c3900"/></linearGradient>
          <linearGradient id="sidegr" x1="0" y1="0" x2="0" y2="1"><stop offset="0" stop-color="#6e4500"/><stop offset=".4" stop-color="#8a5800"/><stop offset=".7" stop-color="#ffb000"/><stop offset="1" stop-color="#ffc800"/></linearGradient>
          <linearGradient id="band" x1="0" y1="0" x2="0" y2="1"><stop offset="0" stop-color="#a37a35" stop-opacity=".95"/><stop offset="1" stop-color="#a37a35" stop-opacity="0"/></linearGradient>
          <pattern id="ribs" width="10" height="10.400" patternUnits="userSpaceOnUse" y="319"><rect width="10" height="10.400" fill="#b08228"/><rect y="0" width="10" height="1.800" fill="#4b4339"/><rect y="4.600" width="10" height="1.600" fill="#4e4434"/><rect y="7.600" width="10" height="1" fill="#6e5a35"/></pattern>
        </defs>
        <rect x="770" y="297" width="18" height="5" rx="2" fill="#ffa500"/><rect x="1449" y="297" width="18" height="5" rx="2" fill="#ffa500"/>
        <rect x="710" y="315" width="6" height="13" rx="2" fill="#b57a12"/><rect x="710" y="331" width="6" height="14" rx="2" fill="#b57a12"/>
        <rect x="1514" y="315" width="6" height="13" rx="2" fill="#b57a12"/><rect x="1514" y="331" width="6" height="14" rx="2" fill="#b57a12"/>
        <rect x="712" y="331" width="4" height="70" fill="#c48a12"/><rect x="1514" y="331" width="4" height="70" fill="#c48a12"/>
        <rect x="715.500" y="300.500" width="799" height="130.500" fill="#ffa500" stroke="#4a4236"/>
        <rect x="716" y="301" width="798" height="18" fill="url(#top)"/>
        <rect x="716" y="319" width="798" height="77" fill="url(#ribs)"/>
        <rect x="716" y="319" width="798" height="9" fill="url(#band)"/>
        <rect x="762" y="346" width="706" height="8" fill="#a37a35" opacity=".55"/>
        <rect x="762" y="386" width="706" height="10" fill="#a37a35" opacity=".75"/>
        <rect x="716" y="396" width="798" height="35" fill="url(#low)"/>
        <path d="M761.500 301v130M1468.500 301v130" stroke="#3f3a30"/>
        <g fill="#ffa500" stroke="#3f4048" stroke-width="1.200"><circle cx="738.500" cy="358" r="14"/><rect x="735" y="371" width="7" height="9"/><circle cx="1491.500" cy="358" r="14"/><rect x="1488" y="371" width="7" height="9"/></g>
        <g><rect x="719" y="431" width="792" height="355" fill="#ffa500"/><path d="M719 431v355M721.500 431v355M1511 431v355M1508.500 431v355M817.500 431v354M821.500 431v354M1405.500 431v354M1409.500 431v354" stroke="#b4791a"/><path d="M719.500 431v355" stroke="#8a6a3a"/></g>
        <rect x="822" y="626" width="588" height="159" fill="#ffa500"/>
        <path d="M822 626.500h588" stroke="#8f6a2a"/>
        <rect x="822" y="627" width="10" height="30" fill="#ffc61a"/><rect x="1399" y="627" width="11" height="30" fill="#ffc61a"/>
        <rect x="822" y="657" width="10" height="68" fill="#ffa500" stroke="#b4791a"/><rect x="1399" y="657" width="11" height="68" fill="#ffa500" stroke="#b4791a"/>
        <rect x="822" y="725" width="10" height="42" fill="url(#sidegr)"/><rect x="1399" y="725" width="11" height="42" fill="url(#sidegr)"/>
        <rect x="832" y="627" width="567" height="30" fill="#ffcc0d"/>
        <rect x="832" y="657" width="567" height="110" fill="#353535"/>
        <path d="M832 657h567" stroke="#8a5a10"/>
        <rect x="825" y="767" width="581" height="18" fill="url(#roll)"/>
        <path d="M832 627v158M1399 627v158" stroke="#8f6a2a" stroke-width=".8"/>
        <rect x="718.500" y="785.500" width="793" height="45" fill="#ffa500" stroke="#8a6a3a"/>
        <path d="M719 788.500h792" stroke="#a0702a"/><path d="M719 828h792" stroke="#7a4e10" stroke-width="2"/>
        <path d="M722 786v44M822 786v44M1408 786v44M1505 786v44" stroke="#b4791a"/>
        <g><path d="M394 947h26" stroke="#9ac79a" stroke-width="5"/><rect x="394" y="950" width="26" height="12" fill="#ccc"/><path d="M420 950v12" stroke="#8a8ae0" stroke-width="3"/><path d="M377 947l9-3v2h10v2h-10v2z" fill="#1e8a1e"/><rect x="418" y="943" width="7" height="7" fill="#d02828"/><text x="366" y="953" class="axis">Y</text></g>
      </svg>
      <div class="wm">
        <svg class="wm-logo" viewBox="0 0 72 82">
          <path d="M36 0l36 20-14 8-22-13z" fill="#c9e6f6"/><path d="M72 20v21l-14-.500V28z" fill="#8bd0f2"/><path d="M72 41v21L58 54V40z" fill="#74c3ec"/>
          <path d="M72 62L36 82 22 68l22-1 14-13z" fill="#72ccf4"/><path d="M36 82L0 62V41l14 13 8 14z" fill="#a3d8f4"/><path d="M0 41V20l36-5-22 13z" fill="#b7e0f6"/>
          <path d="M36 15l22 13v26L36 67 14 54V28z" fill="#e8e9eb"/>
          <path d="M36 24l15 8.500L36 41l-15-8.500z" fill="#c2e3f6"/><path d="M21 32.500L36 41v18l-15-8.500z" fill="#a3d5f4"/><path d="M51 32.500L36 41v18l15-8.500z" fill="#7cc5ee"/>
        </svg>
        <div class="wm-text"><div class="wm-big">3D世界网</div><div class="wm-small">WWW.3DSJW.COM</div></div>
      </div>
    </section>
  </main>

  <div class="dialog">
    <div class="dlg-title"><svg><use href="#gear"/></svg><span>可视化首选项</span><b class="close">✕</b></div>
    <div class="dtabs t1"><span class="dt w66">直线</span><span class="dt w77">特殊效果</span><span class="dt w82">视图/屏幕</span><span class="dt w65">手柄</span><span class="dt w65">着重</span></div>
    <div class="dtabs t2"><span class="dt w78">可视</span><span class="dt act w95">小平面化</span><span class="dt w94">颜色/字体</span><span class="dt w94">名称/边界</span></div>
    <div class="dpanel">
      <div class="shead"><span>部件设置</span><i class="chev up"></i></div>
      <div class="fgroup">
        <div class="ftitle"><span>着色视图</span><i class="chev up sm"></i></div>
        <div class="frow h27"><label>小平面比例</label><span class="combo c51">部件</span></div>
        <div class="frow h27"><label>分辨率</label><span class="combo c75"><span class="sel">极精细</span></span></div>
        <div class="frow h26"><label>细化因子</label><span class="spinb">1.000000</span></div>
        <div class="frow h26"><label>更新</label><span class="combo c75">可见对象</span></div>
        <div class="frow h24 chkrow"><i class="box"></i><label>沿边对齐小平面</label></div>
        <div class="subbox"><span>分辨率公差</span><i class="chev dn sm"></i></div>
      </div>
      <div class="fgroup g2">
        <div class="ftitle"><span>高级可视化视图</span><i class="chev up sm"></i></div>
        <div class="frow h27"><label>小平面比例</label><span class="combo c51">部件</span></div>
        <div class="frow h27"><label>分辨率</label><span class="combo c75">标准</span></div>
        <div class="frow h26"><label>细化因子</label><span class="spinb">1.000000</span></div>
        <div class="frow h26"><label>更新</label><span class="combo c75">可见对象</span></div>
        <div class="frow h24 chkrow"><i class="box"></i><label>沿边对齐小平面</label></div>
        <div class="subbox"><span>分辨率公差</span><i class="chev dn sm"></i></div>
      </div>
      <div class="shead sess"><span>会话设置</span><i class="chev dn"></i></div>
    </div>
    <div class="dfoot"><span class="btn ok">确定</span><span class="btn">应用</span><span class="btn">取消</span></div>
  </div>

  <svg class="marks" viewBox="0 0 1577 960">
    <ellipse cx="497" cy="301" rx="80.500" ry="29.500" transform="rotate(-2 497 301)" fill="none" stroke="#ee2a1e" stroke-width="3.200"/>
    <ellipse cx="492" cy="495" rx="85" ry="31.500" transform="rotate(-2 492 495)" fill="none" stroke="#ee2a1e" stroke-width="3.200"/>
  </svg>
</div>
</body>
</html>
```
FILE: styles.css
```css
* { box-sizing: border-box; }
html, body { margin: 0; padding: 0; }
body { width: 1577px; height: 960px; overflow: hidden; font: 12px/16px "Liberation Sans", "Noto Sans CJK SC", sans-serif; color: #333; background: #fff; }
.defs { position: absolute; width: 0; height: 0; }
.app { position: relative; width: 1577px; height: 960px; display: flex; flex-direction: column; overflow: hidden; }
i, em { font-style: normal; }
.arr { display: inline-block; flex: none; width: 0; height: 0; border: 3px solid transparent; border-top: 4px solid #333; border-bottom: 0; }
.arr.dash { position: relative; }
.arr.dash::before { content: ""; position: absolute; left: -3px; top: -7px; width: 6px; height: 1px; background: #333; }

/* title bar */
.titlebar { flex: none; height: 23px; display: flex; align-items: center; background: #fff; position: relative; }
.logo { width: 31px; margin-left: -6px; font: bold 21px "Liberation Sans", sans-serif; color: #8ba2b4; overflow: hidden; }
.qsep { flex: none; width: 1px; height: 18px; background: #dcdcdc; }
.s1 { margin-left: 7px; } .s2 { margin-left: 7px; } .s3 { margin-left: 9px; } .s4 { margin-left: 6px; }
.qi { flex: none; width: 15px; height: 15px; }
.qi2 { flex: none; width: 18px; height: 18px; }
.m1 { margin-left: 9px; } .m2 { margin-left: 4px; } .m3 { margin-left: 8px; } .m4 { margin-left: 7px; }
.m5 { margin-left: 6px; } .m6 { margin-left: 8px; } .m7 { margin-left: 6px; } .m8 { margin-left: 8px; } .m9 { margin-left: 6px; }
.qt { margin-left: 3px; color: #222; font-size: 11px; }
.doc-title { position: absolute; left: 986px; top: 2px; color: #222; white-space: pre; font-size: 13px; }

/* tabs */
.tabs { flex: none; height: 28px; display: flex; background: #dcdcdc; font-size: 13px; line-height: 28px; }
.file { width: 72px; background: #54a0bc; color: #fff; text-align: center; }
.tab { width: 52px; text-align: center; color: #222; }
.tab.on { width: 53px; margin-left: 1px; background: #fff; color: #0e6c8f; border-top: 1px solid #c8c8c8; line-height: 27px; }
.tab.wide { width: 78px; }

/* ribbon */
.ribbon { flex: none; height: 94px; display: flex; background: #fff; border-bottom: 2px solid #dcdcdc; font-size: 11px; }
.grp { flex: none; position: relative; border-right: 1px solid #e2e2e2; height: 89px; margin-top: 3px; display: flex; flex-direction: column; }
.g-a { width: 168px; } .g-b { width: 369px; } .g-c { width: 172px; } .g-d { width: 43px; } .g-e { width: 104px; }
.g-f { width: 53px; } .g-g { width: 57px; } .g-h { width: 52px; } .g-i { width: 98px; } .g-j { width: 29px; } .g-k { width: 288px; } .g-l { width: 144px; border-right: 0; }
.body { flex: 1; display: flex; min-height: 0; }
.glabel { flex: none; height: 18px; padding-top: 2px; display: flex; justify-content: space-between; align-items: center; color: #2a7c9c; padding-right: 6px; white-space: nowrap; }
.p-49 { padding-left: 49px; } .p-56 { padding-left: 56px; } .p-2 { padding-left: 2px; } .p-4 { padding-left: 4px; } .p-5 { padding-left: 4px; } .p-1 { padding-left: 1px; } .p-55 { padding-left: 55px; } .p-71 { padding-left: 71px; }
.big { flex: none; display: flex; flex-direction: column; align-items: center; padding-top: 3px; white-space: nowrap; color: #333; }
.big > span { margin-top: 4px; line-height: 16px; }
.big .arr { margin-top: 4px; }
.lg { width: 32px; height: 32px; flex: none; }
.w-sk { width: 40px; margin-right: 8px; }
.w-44 { width: 44px; margin-left: 13px; }
.w-40x { width: 40px; margin-left: 4px; }
.w-36 { width: 36px; margin-left: 2px; }
.w-38 { width: 38px; } .w-50 { width: 50px; margin-left: 4px; } .w-42 { width: 42px; } .w-40 { width: 38px; } .w-56 { width: 56px; margin-left: 6px; }
.off > span { color: #bbb; }
.col { flex: none; display: flex; flex-direction: column; padding-left: 8px; }
.w-72 { width: 78px; margin-left: 3px; } .w-64 { width: 71px; } .w-74 { width: 75px; padding-left: 0; } .col.w-44 { width: 44px; margin-left: 0; padding-left: 1px; overflow: hidden; }
.col.w-44 .ci { gap: 9px; }
.ci { height: 22px; display: flex; align-items: center; gap: 3px; white-space: nowrap; color: #333; }
.ci svg { flex: none; width: 16px; height: 16px; }
.ci .ml { margin-left: 6px; }
.morebox { width: 37px; height: 35px; border: 1px solid #e0e0e0; border-radius: 4px; display: flex; align-items: center; justify-content: center; margin-top: 1px; }
.morebox svg { width: 18px; height: 18px; }
.big .morebox + span { margin-top: 2px; }
.skbox { flex: none; width: 99px; height: 66px; margin-top: 2px; border: 1px solid #dcdcdc; display: grid; grid-template-columns: repeat(3, 1fr); grid-template-rows: 1fr 1fr; padding: 2px 4px; gap: 4px 10px; }
.skbox svg { width: 22px; height: 24px; align-self: center; justify-self: center; }
.spin3 { flex: none; margin: 10px 0 0 6px; display: flex; flex-direction: column; gap: 17px; align-items: center; }
.spin3 .up { width: 0; height: 0; border: 3px solid transparent; border-bottom: 4px solid #bbb; border-top: 0; }
.igrid { display: grid; grid-auto-rows: 31px; padding-top: 2px; justify-items: center; align-items: center; align-content: start; }
.igrid svg { width: 17px; height: 17px; }
.c1 { grid-template-columns: 24px; padding-left: 3px; }
.c2 { grid-template-columns: 24px 24px; padding-left: 2px; }
.c4 { grid-template-columns: 25px 25px 25px 27px; padding-left: 1px; }
.g-i .c4 { grid-template-columns: 24px 24px 24px 24px; padding-left: 4px; }
.g-h .c2 { padding-left: 3px; }
.c11 { grid-template-columns: repeat(11, 23.6px); padding-left: 1px; }
.k-first { width: 30px; grid-template-columns: 26px; }
.sepl { margin-left: 2px; }
.shift { position: relative; left: 2px; }
.dx { font: 12px "Liberation Sans"; color: #222; }
.tol { display: flex; flex-direction: column; align-items: center; font: 7.500px/8px "Liberation Sans"; color: #222; }
.tol b { font-weight: bold; }
.tol em { color: #c02020; }
.dxb { border: 1px solid #a02020; width: 15px; height: 15px; text-align: center; font: 12px/13px "Liberation Sans"; color: #222; }
.dxr { font: 13px "Liberation Sans"; color: #222; }
.fit { font: 7.500px/8px "Liberation Sans"; color: #3a50c8; text-align: center; white-space: nowrap; }
.tolb { display: flex; flex-direction: column; align-items: center; font: 7px/8px "Liberation Sans"; }
.tolb svg { width: 13px; height: 11px; }
.tolb b { font-weight: normal; color: #222; }

/* toolbar */
.toolbar { flex: none; height: 32px; display: flex; align-items: center; background: #fff; border-bottom: 1px solid #8e9092; padding-left: 2px; }
.t-menu { width: 14px; height: 14px; flex: none; }
.t-label { margin-left: 5px; color: #222; white-space: nowrap; }
.t-arr { margin-left: 4px; }
.t-sep { width: 1px; height: 22px; background: #dcdcdc; margin-left: 6px; flex: none; }
.t-input { width: 120px; height: 20px; border: 1px solid #b8b8b8; margin-left: 11px; flex: none; }
.t-icons { margin-left: 340px; display: flex; align-items: center; gap: 9px; }
.t-icons svg { width: 16px; height: 16px; flex: none; }
.t-icons .arr { margin: 0 -1.500px; }
.t-sep2 { width: 1px; height: 22px; background: #dcdcdc; flex: none; }

/* main */
.main { flex: 1; display: flex; min-height: 0; }
.rail { flex: none; width: 24px; background: #dcdcdc; border-right: 1px solid #a8a8a8; display: flex; flex-direction: column; }
.rail svg { width: 21px; height: 24px; overflow: visible; }
.rail-gear { height: 41px; display: flex; align-items: center; border-bottom: 1px solid #a8a8a8; }
.rail-gear svg { width: 12px; height: 12px; fill: #555; }
.rail-on { height: 44px; background: #fff; display: flex; align-items: center; margin-right: -1px; position: relative; border-bottom: 1px solid #a8a8a8; }
.rail-list { display: grid; grid-template-rows: 42px 42px 40px 66px 44px 62px 26px 56px 26px; align-items: center; justify-items: start; }
.navpanel { flex: none; width: 330px; background: #fff; display: flex; flex-direction: column; padding-left: 6px; border-right: 1px solid #c4c4c4; }
.nav-title { margin: 0; height: 30px; font-size: 12px; font-weight: normal; line-height: 30px; padding-left: 3px; color: #222; }
.table { flex: 1; width: 317px; border-left: 1px solid #dcdcdc; border-right: 1px solid #dcdcdc; display: flex; flex-direction: column; min-height: 0; }
.thead { flex: none; height: 21px; background: #f0f0f0; border-bottom: 1px solid #dcdcdc; display: flex; align-items: center; padding-left: 6px; color: #222; }
.sort { width: 0; height: 0; border: 5px solid transparent; border-bottom: 5px solid #222; border-top: 0; margin-left: 18px; }
.tree { flex: none; height: 699px; background: repeating-linear-gradient(#fff 0 19px, #e8e8e8 19px 20px, #f9f9f9 20px 39px, #e8e8e8 39px 40px); }
.row { height: 20px; display: flex; align-items: center; white-space: nowrap; position: relative; color: #333; }
.row strong { font-weight: bold; color: #222; margin-left: 2px; }
.row span { margin-left: 3px; }
.row.r0 { padding-left: 19px; }
.row.r1x { padding-left: 5px; }
.row.r2x { padding-left: 24px; }
.ic { width: 15px; height: 15px; flex: none; margin-left: 2px; }
.row.r0 .ic { margin-left: 0; }
.cb { width: 13px; height: 13px; flex: none; margin-left: 7px; }
.exp { flex: none; width: 9px; height: 9px; border: 1px solid #c8c8c8; background: #fff linear-gradient(#222, #222) center / 5px 1px no-repeat; position: relative; z-index: 1; }
.exp::after { content: ""; position: absolute; left: 3px; top: 1px; width: 1px; height: 5px; background: #222; }
.exp.minus::after { display: none; }
.leaf .exp { visibility: hidden; }
.ic.warnic { margin-left: 6px; }
.r0::before { content: ""; position: absolute; left: 9px; top: 9px; width: 9px; height: 19px; border-left: 1px dotted #888; border-top: 1px dotted #888; }
.r2x::before { content: ""; position: absolute; left: 28px; top: -10px; height: 20px; border-left: 1px dotted #888; }
.r2x::after { content: ""; position: absolute; left: 28px; top: 10px; width: 14px; border-top: 1px dotted #888; }
.tfoot { flex: none; height: 10px; background: #f9f9f9; position: relative; border-bottom: 1px solid #e8e8e8; }
.tfoot::before { content: ""; position: absolute; left: 229px; top: 0; width: 1px; height: 10px; background: #111; }
.hscroll { flex: none; height: 16px; display: flex; align-items: center; background: #f0f0f0; }
.sl { width: 0; height: 0; border: 4px solid transparent; border-right: 5px solid #333; border-left: 0; margin-left: 7px; }
.thumb { width: 185px; height: 15px; margin-left: 7px; border: 1px solid #aaa; border-radius: 2px; background: linear-gradient(#eee, #c4c4c4); display: flex; align-items: center; justify-content: center; }
.thumb em { width: 7px; height: 7px; background: repeating-linear-gradient(90deg, #666 0 1px, transparent 1px 3px); }
.sr { width: 0; height: 0; border: 4px solid transparent; border-left: 5px solid #333; border-right: 0; margin-left: 98px; }
.navfoot { flex: none; height: 7px; margin-left: -1px; width: 322px; background: #ececec; border-top: 1px solid #c0c0c0; }
.viewport { flex: 1; position: relative; background: linear-gradient(#b5b6b8, #e7e8ea 72%, #e7e8ea); overflow: hidden; border-left: 1px solid #fff; }
.model { position: absolute; left: 0; top: 0; width: 1223px; height: 783px; }
.axis { font: 12px "Liberation Sans"; fill: #3a9a3a; }
.wm { position: absolute; left: 940px; top: 688px; display: flex; gap: 6px; }
.wm-logo { width: 72px; height: 82px; flex: none; }
.wm-text { color: #f2f3f4; padding-top: 7px; }
.wm-big { font: bold 42px/44px "Noto Sans CJK SC", "Liberation Sans", sans-serif; white-space: nowrap; }
.wm-small { font: 12px/14px "Liberation Sans", sans-serif; letter-spacing: 5.500px; margin-top: 5px; white-space: nowrap; }

/* dialog */
.dialog { position: absolute; left: 181px; top: 109px; width: 380px; height: 816px; background: #eee; border: 1px solid #dadada; border-top: 0; display: flex; flex-direction: column; z-index: 2; }
.dlg-title { flex: none; height: 24px; margin: 0 -1px; background: #54a0bc; color: #fff; display: flex; align-items: center; padding: 0 8px; font-size: 13px; }
.dlg-title svg { width: 14px; height: 14px; fill: #fff; margin-right: 10px; }
.close { margin-left: auto; font: bold 17px/24px "DejaVu Sans", sans-serif; margin-right: -1px; padding-top: 2px; }
.dtabs { flex: none; display: flex; padding-left: 7px; font-size: 12px; text-align: center; color: #333; }
.t1 { gap: 2px; margin-top: 6px; height: 28px; }
.t2 { height: 28px; }
.dt { background: #eee; border: 1px solid #dcdcdc; display: block; line-height: 29px; }
.w66 { width: 66px; } .w77 { width: 77px; } .w82 { width: 82px; } .w65 { width: 65px; } .w78 { width: 78px; } .w95 { width: 95px; } .w94 { width: 94px; margin-right: 2px; }
.dt.act { background: #fff; border-color: #c8c8c8; border-bottom: 0; height: 32px; margin-top: -2px; position: relative; z-index: 1; line-height: 31px; }
.dpanel { flex: none; height: 686px; margin: 0 6px 0 6px; width: 367px; background: #fff; border: 1px solid #c8c8c8; color: #333; }
.shead { height: 32px; display: flex; align-items: center; justify-content: space-between; padding: 0 10px 2px 10px; font-size: 14px; color: #1d7396; }
.shead.sess { height: 29px; margin: 8px 4px 0 4px; border-top: 2px solid #dcdcdc; border-bottom: 2px solid #dcdcdc; padding: 5px 6px 0; }
.chev { width: 8px; height: 8px; border-left: 2px solid #0e6c8f; border-top: 2px solid #0e6c8f; flex: none; }
.chev.up { transform: translateY(2px) rotate(45deg); }
.chev.dn { transform: translateY(-2px) rotate(225deg); }
.chev.sm { width: 7px; height: 7px; border-width: 1.500px; }
.fgroup { width: 340px; height: 195px; margin-left: 13px; background: #eee; border: 1px solid #d9d9d9; display: flex; flex-direction: column; }
.g2 { margin-top: 2px; }
.ftitle { flex: none; height: 28px; display: flex; align-items: center; justify-content: space-between; padding: 0 9px 4px 8px; color: #2c7a9a; }
.g2 .ftitle { height: 29px; padding-bottom: 7px; }
.g2 .subbox { margin-top: 2px; }
.frow { flex: none; display: flex; align-items: center; justify-content: space-between; padding: 0 8px; }
.h27 { height: 27px; } .h26 { height: 26px; } .h24 { height: 24px; }
.chkrow { justify-content: flex-start; gap: 6px; }
.box { width: 12px; height: 12px; border: 1px solid #999; background: linear-gradient(135deg, #d8d8d8, #fff); }
.combo { height: 25px; border: 1px solid #a8a8a8; background: #fff; position: relative; display: flex; align-items: center; padding: 2px 0 0 4px; color: #333; white-space: nowrap; }
.combo::after { content: ""; position: absolute; right: 5px; top: 10px; border: 3.500px solid transparent; border-top: 4px solid #222; border-bottom: 0; }
.c51 { width: 51px; } .c75 { width: 75px; }
.sel { display: flex; align-items: center; width: 52px; height: 19px; margin: -2px 0 0 -2px; background: #add5e5; border: 1px dotted #333; padding: 1px 0 0 1px; }
.spinb { width: 82px; height: 23px; border: 1px solid #a8a8a8; background: #fff; line-height: 26px; padding-left: 4px; font-size: 13px; letter-spacing: 1px; overflow: hidden; position: relative; white-space: nowrap; }
.spinb::after { content: ""; position: absolute; right: 0; top: 0; width: 18px; height: 21px; background: #fff; }
.spinb::before { content: ""; position: absolute; z-index: 1; right: 5px; top: 4px; border: 3px solid transparent; border-bottom: 4px solid #222; border-top: 0; }
.subbox { flex: none; height: 24px; margin: 3px 8px 0 8px; background: #fff; border: 1px solid #d9d9d9; display: flex; align-items: center; justify-content: space-between; padding: 0 7px 0 8px; color: #2c7a9a; }
.dfoot { flex: none; display: flex; justify-content: flex-end; gap: 5px; padding: 10px 15px 0 0; }
.btn { width: 54px; height: 25px; background: #dcdcdc; border: 1px solid #aaa; text-align: center; line-height: 23px; color: #222; }
.btn.ok { background: #72b3ca; border-color: #72b3ca; color: #fff; }
.marks { position: absolute; left: 0; top: 0; width: 1577px; height: 960px; z-index: 3; pointer-events: none; }
```
